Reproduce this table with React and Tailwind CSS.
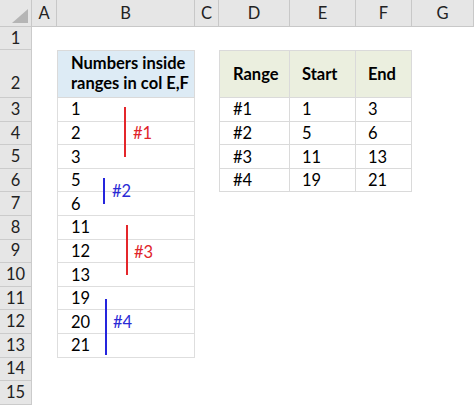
import React from "react";

// sheet geometry
const COLS = [
  { key: "A", w: "w-[25px]" },
  { key: "B", w: "w-[138px]" },
  { key: "C", w: "w-[24px]" },
  { key: "D", w: "w-[71px]" },
  { key: "E", w: "w-[66px]" },
  { key: "F", w: "w-[56px]" },
  { key: "G", w: "w-[62px]" },
];

const ROWS = [
  { n: 1, h: "h-[23px]" },
  { n: 2, h: "h-[48px]" },
  ...Array.from({ length: 13 }, (_, i) => ({ n: i + 3, h: "h-[23.6px]" })),
];

const numbers = [1, 2, 3, 5, 6, 11, 12, 13, 19, 20, 21];

const ranges = [
  ["#1", 1, 3],
  ["#2", 5, 6],
  ["#3", 11, 13],
  ["#4", 19, 21],
];

// drawn shapes on top of column B
const marks = [
  {
    label: "#1",
    line: "left-[124px] top-[107px] h-[50px] bg-[#e4262b]",
    text: "left-[133px] top-[123px] text-[#e0242a]",
  },
  {
    label: "#2",
    line: "left-[103px] top-[178px] h-[26px] bg-[#2525dd]",
    text: "left-[112px] top-[181px] text-[#2a2ad6]",
  },
  {
    label: "#3",
    line: "left-[126px] top-[225px] h-[50px] bg-[#e4262b]",
    text: "left-[134px] top-[242px] text-[#e0242a]",
  },
  {
    label: "#4",
    line: "left-[105px] top-[299px] h-[56px] bg-[#2525dd]",
    text: "left-[113px] top-[312px] text-[#2a2ad6]",
  },
];

const Cell = ({ col, row }) => {
  const base = `${col.w} h-full shrink-0 flex text-black`;

  // table in column B (rows 2-13)
  if (col.key === "B" && row >= 2 && row <= 13) {
    if (row === 2) {
      return (
        <div className={`${base} items-end pb-[4px] pl-[13px] font-bold leading-[20px] bg-[#ddebf5] border border-[#dadada]`}>
          Numbers inside
          <br />
          ranges in col E,F
        </div>
      );
    }
    return (
      <div className={`${base} items-center pt-[1px] pl-[13px] border-x border-b border-[#dedede]`}>
        {numbers[row - 3]}
      </div>
    );
  }

  // table in columns D-F (rows 2-6)
  const ti = ["D", "E", "F"].indexOf(col.key);
  if (ti >= 0 && row >= 2 && row <= 6) {
    const edge =
      ti === 0
        ? "border-l border-r border-b border-[#dadada] pl-[13px]"
        : "border-r border-b border-[#dadada] pl-[12px]";
    if (row === 2) {
      return (
        <div className={`${base} ${edge} border-t items-center font-bold bg-[#ebefdf]`}>
          {["Range", "Start", "End"][ti]}
        </div>
      );
    }
    return (
      <div className={`${base} ${edge} items-center pt-[1px]`}>
        {ranges[row - 3][ti]}
      </div>
    );
  }

  return <div className={`${base} bg-white`} />;
};

const App = () => {
  return (
    <div className="relative w-[474px] h-[405px] overflow-hidden bg-white text-[16.5px] font-['Lato','Open_Sans',sans-serif]">
      {/* Column headers */}
      <div className="flex h-[27px]">
        <div className="relative w-[32px] shrink-0 bg-[#e6e6e6] border-r border-b border-[#c8c8c8]">
          <svg className="absolute right-[3px] bottom-[3px]" width="16" height="14" viewBox="0 0 16 14">
            <polygon points="16,0 16,14 0,14" fill="#b5b5b5" />
          </svg>
        </div>
        {COLS.map((c) => (
          <div
            key={c.key}
            className={`${c.w} shrink-0 flex items-center justify-center bg-[#e6e6e6] border-r border-b border-[#c8c8c8] text-[#222]`}
          >
            {c.key}
          </div>
        ))}
      </div>

      {/* Rows */}
      {ROWS.map((r) => (
        <div key={r.n} className={`flex ${r.h}`}>
          <div className="w-[32px] shrink-0 flex items-center justify-center bg-[#e6e6e6] border-r border-b border-[#cbcbcb] text-[#222]">
            {r.n === 2 ? <span className="self-end pb-[1px]">2</span> : r.n}
          </div>
          {COLS.map((c) => (
            <Cell key={c.key} col={c} row={r.n} />
          ))}
        </div>
      ))}

      {/* Drawn range markers */}
      {marks.map((m) => (
        <React.Fragment key={m.label}>
          <div className={`absolute w-[2px] ${m.line}`} />
          <div className={`absolute leading-[20px] ${m.text}`}>{m.label}</div>
        </React.Fragment>
      ))}
    </div>
  );
};

export default App;
